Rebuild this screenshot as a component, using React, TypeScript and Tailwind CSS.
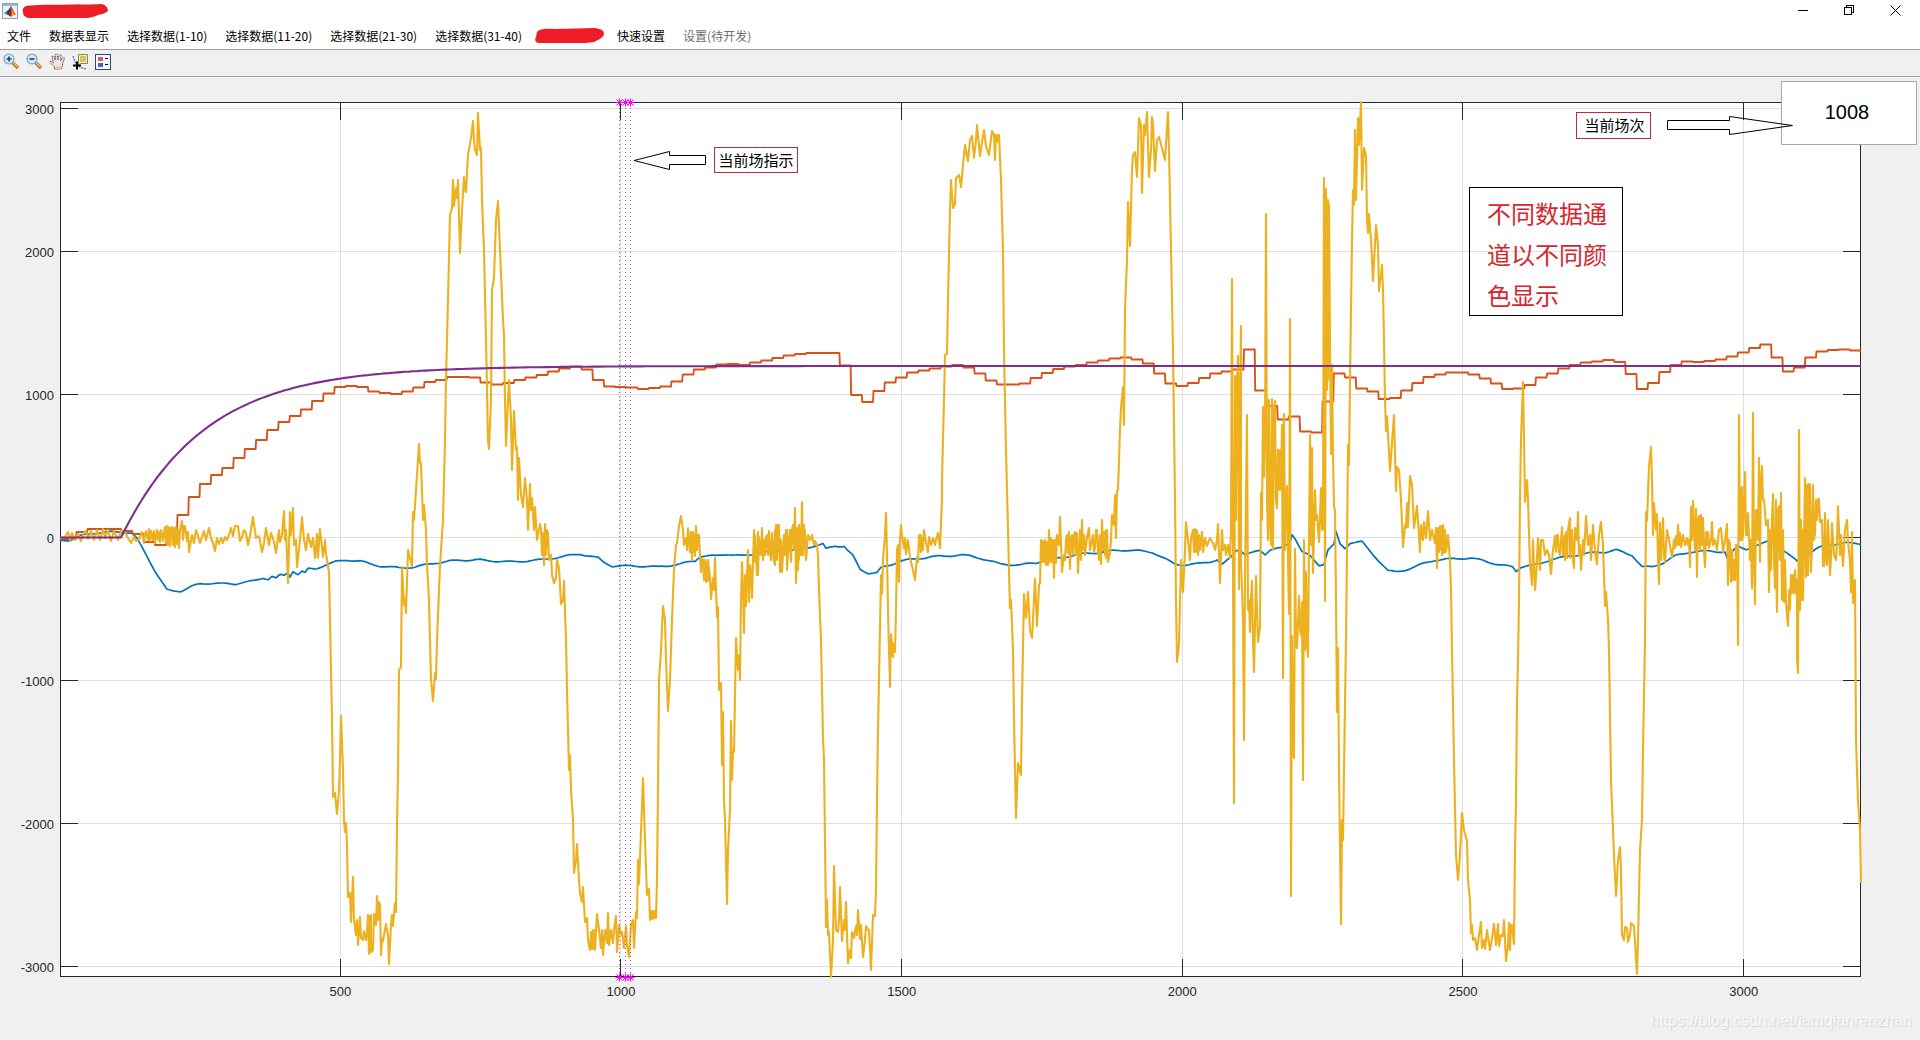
import React from "react";

const SANS = "font-['Liberation_Sans','Noto_Sans_CJK_SC',sans-serif]";

type Point = [number, number];

const parse = (text: string): Point[] =>
  text
    .trim()
    .split(/\s+/)
    .map((pair) => pair.split(",").map(Number) as Point);

const toPath = (points: Point[]) => "M" + points.map(([x, y]) => `${x.toFixed(1)} ${y.toFixed(1)}`).join("L");

/* Yellow channel: fast oscillating signal. */
const YELLOW = `
60,538 65,537 68,532 70,540 72,533 75,540 78,534 81,541 84,533 86,531 88,539 91,531 94,540 97,530 100,540 103,529 105,538 108,530 111,541 114,531 118,540
121,531 125,532 128,538 131,543 134,537 136,541 139,539 142,532 144,543 145,534 146,531 148,540 149,529 150,541 151,531 153,540 154,531 155,543 157,530 158,540 159,532 160,542 161,530 163,541
164,532 165,527 166,543 167,526 168,545 169,527 170,546 171,529 172,527 173,545 174,528 175,547 176,527 177,544 178,530 179,548 180,530 182,521 183,540 184,526 185,526 187,541 188,532 189,552
192,535 194,543 196,530 198,536 200,543 202,537 204,531 206,540 209,528 211,538 213,543 215,551 217,538 219,544 221,538 223,543 225,537 227,540 229,535 231,528
233,536 235,526 238,526 240,541 242,537 244,530 246,533 248,545 250,536 253,517 256,538 259,536 262,552 264,543 266,528 269,545 271,533 274,542 276,553 278,537
279,530 280,542 282,535 284,511 285,540 286,530 288,583 290,512 291,535 293,508 294,545 296,540 297,567 300,540 302,517 304,540 306,550 308,534 311,547 313,538 315,558 317,534 318,558 320,529
323,557 325,540 326,554 329,572 330,620 332,720 333,797 335,793 337,814 339,790 340,760 341,716 343,770 344,820 345,832 346,823 347,845 348,897 350,893 351,922
353,877 354,920 356,935 357,920 358,945 360,917 361,938 363,940 364,931 366,940 367,932 368,915 369,954 370,916 371,915 371,952 373,950 374,914 376,925 377,896 378,920 379,902 380,905 381,955 382,938 383,941 386,924
388,935 389,964 391,925 392,915 393,926 395,903 396,912 397,825 398,775 399,670 401,667 402,567 404,605 405,598 406,613 408,550 410,558 412,566 413,512 414,520
416,490 419,444 420,463 421,463 423,520 424,505 426,530 427,565 429,600 431,680 433,701 435,673 436,679 437,640 439,590 440,566 443,520 445,440 446,380 448,300
450,215 452,208 453,180 454,206 456,188 457,198 458,180 460,253 462,210 464,177 465,190 466,192 468,155 471,138 473,121 474,140 475,150 477,155 478,113 480,150
481,148 482,200 484,250 486,340 488,440 489,449 491,400 492,290 494,278 496,220 498,201 500,250 503,320 504,335 505,400 506,446 508,400 509,380 511,420 512,470
514,411 516,450 517,447 518,500 519,458 521,495 523,507 525,478 527,500 528,530 530,484 531,510 532,498 534,530 535,507 537,540 540,524 541,530 542,555 543,533
544,565 545,524 546,555 547,530 548,533 549,560 551,555 552,575 554,583 556,578 557,560 559,568 561,604 563,600 564,581 566,640 567,690 569,770 570,755 571,790
573,820 574,873 576,860 577,844 579,880 580,893 582,902 583,887 585,922 587,918 588,940 590,950 591,932 592,949 593,930 594,949 595,930 595,950 597,914 599,930 601,948 602,930
603,955 605,930 607,943 608,913 609,945 611,930 613,943 614,930 616,916 617,952 619,925 621,935 622,932 624,948 626,926 627,945 629,957 631,925 633,920 634,948
636,912 637,918 638,860 639,884 641,832 643,778 645,840 647,895 649,889 650,920 651,911 652,919 653,911 654,918 655,911 656,918 657,880 658,790 659,680 661,650 663,606 665,620 666,660
668,711 670,680 672,620 674,570 676,545 677,543 679,526 681,516 683,530 684,545 686,538 687,550 688,528 690,552 691,532 692,560 693,532 694,552 695,534 695,556 696,526 697,550 698,535 699,535
700,555 701,572 702,558 703,560 704,580 705,560 706,582 707,562 708,581 708,560 710,577 711,599 713,578 714,590 715,558 716,590 717,617 718,607 719,690 721,683 722,765 723,712 724,800
725,820 727,904 728,850 730,810 731,721 732,780 733,750 734,752 736,638 738,670 739,655 740,680 741,600 742,562 743,590 744,633 745,575 746,606 747,575 748,550 749,602
750,565 751,570 752,598 753,560 754,530 755,562 755,535 757,575 758,532 758,575 759,537 761,555 762,528 763,560 764,540 765,555 766,538 767,535 768,555 769,531 770,552 771,560 772,533 773,552 774,562 775,530
775,565 776,525 777,560 778,525 779,525 780,572 781,540 782,572 784,535 785,555 786,530 787,530 787,570 789,540 790,530 791,562 792,530 793,525 794,550 795,508 796,583 797,528 798,570 799,525 799,560 800,528 801,555 802,502 803,555 804,525 804,548 805,530 806,560 808,535
810,540 812,535 814,545 815,541 817,545 818,555 819,590 821,640 822,690 823,738 824,760 825,840 826,927 827,900 828,935 829,932 831,977 833,940 834,866 835,900
836,930 838,932 839,920 840,887 842,941 844,920 845,930 846,902 848,963 850,950 851,958 852,932 854,938 856,926 857,935 858,910 860,939 861,925 863,957 865,940
866,926 868,930 869,930 871,970 873,915 875,916 876,890 877,800 878,730 879,680 881,575 882,594 883,560 885,535 886,513 887,555 888,610 889,650 890,687 891,634
893,657 893,643 895,652 896,610 897,550 898,545 899,582 900,540 901,525 902,535 904,548 905,538 906,554 908,540 910,558 913,570 915,580 917,557 918,562 919,535
921,552 921,535 923,550 924,530 925,537 928,552 929,537 931,545 933,538 935,545 936,540 938,533 940,548 942,500 942,480 943,440 944,400 945,355 947,354 948,300
950,210 951,180 953,208 955,204 956,178 959,175 961,187 963,165 965,145 968,161 970,140 972,136 974,158 976,140 977,125 980,156 982,142 984,130 986,146 989,155
992,131 994,135 995,160 996,135 997,142 998,135 999,135 1001,180 1003,250 1004,350 1006,450 1008,530 1009,570 1010,608 1011,600 1013,650 1014,720 1016,818 1018,763 1021,775
1022,700 1024,594 1026,618 1028,592 1030,630 1032,638 1034,600 1035,579 1037,626 1039,585 1040,583 1041,540 1042,562 1043,541 1044,562 1045,540 1046,565 1047,542 1048,565 1049,530 1050,562 1051,538 1052,562 1053,540 1054,578 1055,540 1056,563 1057,535
1059,545 1060,517 1062,572 1064,555 1065,560 1066,540 1067,535 1068,553 1069,532 1070,569 1071,538 1072,535 1073,555 1074,535 1075,532 1076,555 1077,533 1078,573 1080,530 1081,560 1082,520 1083,550 1084,535 1085,555 1087,537 1089,528 1090,550 1092,540
1093,535 1094,552 1095,548 1096,530 1097,530 1098,550 1099,560 1100,535 1101,564 1102,520 1103,550 1104,532 1105,555 1106,530 1106,558 1107,530 1108,562 1110,553 1111,540 1112,515 1114,525 1115,495 1116,538 1117,491 1118,490 1120,430
1121,408 1123,387 1124,425 1125,310 1127,260 1128,202 1130,246 1132,170 1133,155 1135,152 1137,177 1139,118 1141,125 1142,193 1144,125 1145,135 1147,112 1149,177
1151,150 1152,117 1153,125 1155,171 1157,140 1159,137 1162,148 1165,160 1168,112 1169,150 1171,250 1173,350 1175,500 1176,600 1177,662 1179,645 1181,560 1183,592
1185,550 1186,522 1188,540 1190,560 1191,538 1193,530 1194,552 1195,529 1196,552 1197,530 1198,555 1199,535 1200,550 1202,532 1203,552 1205,538 1207,546 1210,538 1213,543 1215,550 1217,540 1218,524
1220,583 1222,530 1223,550 1225,545 1226,555 1228,545 1230,558 1231,530 1232,279 1233,560 1234,803 1235,376 1236,520 1237,380 1238,356 1239,589 1240,400 1241,326 1241,560 1243,620 1244,740
1245,580 1247,415 1248,610 1249,600 1250,632 1251,600 1252,581 1253,640 1254,672 1256,576 1258,642 1260,626 1261,493 1262,520 1263,407 1264,477 1265,440 1266,214 1267,500 1268,540 1269,400 1270,520
1271,545 1272,399 1273,550 1274,410 1275,401 1276,500 1277,508 1278,450 1279,490 1280,450 1281,490 1282,425 1283,678 1284,414 1285,550 1286,500 1287,486 1288,560 1289,614 1290,319 1291,896 1292,636 1293,750 1294,758 1295,549 1296,640 1297,648
1299,596 1300,630 1301,635 1302,602 1303,780 1304,540 1305,650 1306,572 1307,645 1308,657 1310,435 1311,545 1312,448 1313,573 1315,490 1316,520 1317,515 1319,542 1321,488 1322,530 1323,528 1324,178 1325,601
1326,189 1327,390 1328,200 1328,380 1329,204 1330,340 1331,454 1332,365 1333,455 1334,507 1335,510 1336,600 1337,712 1338,648 1339,770 1341,924 1342,820 1343,840 1344,770 1346,640 1347,550 1348,445
1349,465 1350,380 1352,240 1353,190 1354,204 1355,130 1356,200 1358,118 1359,145 1361,102 1362,190 1364,148 1366,155 1367,220 1368,233 1369,214 1371,240 1373,281
1376,225 1378,245 1379,291 1382,265 1383,290 1384,340 1385,400 1386,431 1387,416 1390,471 1394,415 1396,491 1397,467 1399,470 1401,500 1403,547 1405,525 1406,528
1407,503 1408,527 1410,476 1412,485 1414,528 1417,506 1420,552 1421,525 1423,540 1424,522 1426,538 1428,511 1430,540 1432,530 1435,543 1436,528 1437,568 1438,528
1439,552 1440,526 1441,550 1442,526 1442,555 1443,525 1444,553 1445,530 1446,552 1448,535 1450,560 1451,590 1452,650 1454,760 1456,855 1458,880 1460,855 1462,813 1464,830 1466,838 1467,840 1468,880
1470,900 1471,933 1472,925 1473,940 1475,938 1477,950 1479,935 1481,922 1482,948 1484,940 1485,949 1487,930 1490,950 1492,938 1494,924 1496,945 1498,924 1499,946
1501,935 1503,936 1504,920 1506,961 1508,945 1509,923 1510,950 1511,925 1512,925 1514,944 1515,850 1516,800 1517,700 1518,660 1519,600 1520,500 1521,440 1523,382 1524,440
1525,502 1527,480 1528,500 1530,565 1532,585 1533,540 1535,590 1536,578 1538,538 1540,570 1541,540 1543,540 1545,555 1547,550 1549,555 1551,574 1553,550 1555,536
1556,552 1557,535 1558,535 1559,552 1560,555 1562,527 1563,555 1564,536 1565,560 1566,532 1567,558 1568,530 1570,518 1570,558 1572,530 1573,560 1574,568 1575,528 1577,540 1578,512 1579,555 1580,545 1581,570 1583,540 1584,555 1586,516 1588,545
1590,535 1591,560 1593,525 1595,552 1597,564 1599,535 1601,522 1603,545 1605,606 1606,592 1608,620 1609,650 1611,780 1613,830 1614,855 1616,896 1618,860 1620,847
1621,870 1622,935 1624,940 1625,927 1627,928 1628,942 1630,935 1631,923 1634,926 1637,974 1638,940 1640,850 1642,820 1643,750 1645,640 1646,512 1647,521 1649,466
1651,447 1652,480 1653,535 1654,503 1656,530 1657,514 1658,560 1659,584 1660,523 1661,560 1663,518 1664,557 1665,562 1667,530 1669,540 1672,557 1674,540 1675,548 1676,536 1677,545 1678,525 1679,545 1680,533 1681,547
1683,535 1685,545 1687,538 1688,545 1689,540 1690,567 1691,507 1692,540 1693,501 1694,530 1695,550 1696,509 1697,577 1698,520 1699,516 1700,550 1701,515 1702,545 1703,518 1704,550 1705,567 1706,532 1707,545 1708,532 1709,548 1711,540 1712,522 1713,545
1715,540 1717,550 1719,530 1721,528 1723,552 1725,540 1727,524 1728,585 1729,540 1730,545 1731,582 1732,550 1733,580 1734,560 1735,580 1736,545 1737,545 1738,645 1739,415 1740,540 1741,490 1742,487 1742,540 1743,535 1745,472
1746,535 1747,535 1748,513 1750,560 1751,540 1752,588 1753,413 1754,560 1755,604 1756,510 1757,510 1758,540 1759,458 1760,562 1761,480 1762,466 1763,500 1764,500 1766,525 1768,520 1769,592 1770,530 1771,570 1772,520 1773,494 1774,560 1775,588
1776,500 1776,560 1777,612 1778,510 1779,506 1780,560 1781,493 1782,600 1783,530 1784,602 1785,560 1786,603 1788,626 1789,590 1790,610 1791,575 1792,593 1793,575 1794,593 1795,570 1796,594 1797,580 1797,660 1798,673 1799,430 1800,610 1801,520 1802,600 1803,530 1803,600
1805,478 1806,577 1807,486 1808,484 1808,575 1810,484 1811,572 1812,547 1813,485 1814,540 1815,533 1816,500 1817,520 1818,499 1819,499 1820,522 1822,520 1823,566 1824,566 1825,513 1826,560 1827,565 1828,520 1830,575 1831,558 1832,523
1834,555 1836,560 1837,540 1838,506 1840,555 1841,535 1843,566 1845,530 1847,520 1848,542 1850,560 1851,592 1852,532 1853,603 1855,580 1856,740 1858,800 1860,830
1861,883`;

/* Blue channel: slow signal with a small ripple. */
const BLUE = `
60,540 70,540 80,536 95,533 105,532 125,532 132,533 137,539 148,558 158,576 167,590 173,591 181,591 190,587 200,584 213,583 225,584 235,584 243,582 255,581
264,578 268,579 272,576 276,578 280,575 284,576 288,573 290,577 293,571 298,574 302,571 305,573 308,569 315,569 325,565 335,562 348,560 360,561 370,564 380,566 400,568 415,567 425,565 435,563 450,561 465,560 480,560 510,562 540,560 560,557 580,554
590,556 598,558 603,562 612,566 640,566 658,567 680,564 695,561 700,556 715,556 727,554 742,556 755,554 775,551 790,551 805,548 823,544 826,549 835,546
844,546 848,551 853,556 860,569 868,573 877,573 881,568 890,565 900,561 915,559 930,557 960,555 970,556 980,558 990,561 1000,564 1020,565 1035,563 1045,560
1060,558 1080,554 1095,553 1110,551 1125,550 1140,551 1152,552 1165,559 1175,564 1185,565 1197,564 1208,562 1217,560 1222,565 1230,558 1236,550 1240,549 1245,555
1252,553 1260,550 1265,554 1270,550 1282,548 1290,542 1292,534 1295,538 1302,552 1310,556 1319,565 1324,564 1328,550 1334,545 1336,532 1340,544 1345,548 1350,543
1362,542 1370,551 1380,562 1388,571 1396,572 1405,570 1415,567 1425,563 1435,560 1450,559 1470,558 1485,561 1500,565 1513,567 1516,571 1521,567 1535,565 1550,560
1570,556 1590,553 1605,552 1616,550 1625,553 1632,555 1642,567 1652,567 1665,562 1675,556 1690,552 1710,551 1725,552 1727,558 1738,546 1746,549 1760,545 1770,540
1780,548 1790,556 1797,561 1805,556 1815,550 1825,545 1845,543 1861,544`;

/* Orange channel: one level for every twenty samples. */
const ORANGE_LEVELS = [
  532, 529, 529, 529, 531, 534, 542, 545, 531, 515, 497, 484, 475, 468, 458, 449, 440, 430, 422, 416,
  409.5, 401, 393.5, 387, 386, 387, 391.5, 393, 394, 391.5, 387.5, 382, 380, 377, 377, 377.5, 382.5, 384.5, 383, 380,
  377.5, 375, 371.5, 368.5, 366.5, 369.5, 380, 386.5, 387, 387.5, 389, 388, 386.5, 381.5, 374.5, 369.5, 367.5, 364.5, 364, 365,
  362.5, 360.5, 358, 355.5, 354, 353, 353, 353, 365.5, 395, 402, 391, 382.5, 377.5, 372.5, 370.5, 368.5, 366.5, 365, 367.5,
  373.5, 380.5, 384.5, 384.5, 383.5, 378, 373, 369, 366.5, 365, 362.5, 360.5, 358.5, 357.5, 359.5, 363.5, 373.5, 383.5, 386, 383,
  378, 373.5, 371.5, 369.5, 349.5, 390.5, 406, 419.5, 416.5, 431.5, 432.5, 401.5, 373.5, 377.5, 388.5, 391.5, 399, 398, 390.5, 383,
  377, 374.5, 372.5, 372.5, 374.5, 378.5, 383.5, 389, 388.5, 385, 377.5, 373.5, 368.5, 365, 362.5, 361.5, 360, 362, 374, 389,
  383, 372, 365, 361.5, 362, 361, 359.5, 356.5, 352.5, 348, 344.5, 357.5, 371.5, 367.5, 357.5, 351.5, 350, 349.5, 350.5,
];

function rippled(points: Point[]): Point[] {
  const out: Point[] = [];
  let n = 0;
  for (let i = 0; i < points.length - 1; i++) {
    const [x0, y0] = points[i];
    const [x1, y1] = points[i + 1];
    for (let x = x0; x < x1; x += 2) {
      const t = (x - x0) / (x1 - x0);
      out.push([x, y0 + (y1 - y0) * t + Math.sin(n * 12.9898) * 0.8]);
      n++;
    }
  }
  out.push(points[points.length - 1]);
  return out;
}

function stepped(): Point[] {
  const out: Point[] = [
    [60, 539],
    [76, 539],
  ];
  ORANGE_LEVELS.forEach((y, i) => {
    out.push([76.5 + i * 11.226, y], [76 + (i + 1) * 11.226, y]);
  });
  return out;
}

function saturating(): Point[] {
  const out: Point[] = [[60, 537.5]];
  for (let x = 121; x <= 1861; x += 4) {
    out.push([x, 537.5 - 171.5 * (1 - Math.exp(-(x - 121) / 84))]);
  }
  out.push([1861, 366]);
  return out;
}

const X_TICKS = [
  { label: "500", at: 340.5 },
  { label: "1000", at: 620.5 },
  { label: "1500", at: 901.5 },
  { label: "2000", at: 1182.5 },
  { label: "2500", at: 1462.5 },
  { label: "3000", at: 1743.5 },
];
const Y_TICKS = [
  { label: "3000", at: 108.5 },
  { label: "2000", at: 251.5 },
  { label: "1000", at: 394.5 },
  { label: "0", at: 537.5 },
  { label: "-1000", at: 680.5 },
  { label: "-2000", at: 823.5 },
  { label: "-3000", at: 966.5 },
];
const CURSORS = [619.5, 625.5, 630.5];

function Plot() {
  return (
    <svg
      className="block h-full min-w-0 flex-1 overflow-visible"
      viewBox="60 102 1801 875"
      preserveAspectRatio="none"
      role="img"
      aria-label="数据曲线"
    >
      <rect x="60" y="102" width="1801" height="875" fill="#fff" />
      <g stroke="#dedede" shapeRendering="crispEdges">
        {X_TICKS.map((t) => (
          <line key={t.label} x1={t.at} x2={t.at} y1="102" y2="977" />
        ))}
        {Y_TICKS.map((t) => (
          <line key={t.label} x1="60" x2="1861" y1={t.at} y2={t.at} />
        ))}
      </g>
      <g stroke="#262626" fill="none" shapeRendering="crispEdges">
        <rect x="60.5" y="102.5" width="1800" height="874" />
        {X_TICKS.map((t) => (
          <path key={t.label} d={`M${t.at} 102V120M${t.at} 977V959`} />
        ))}
        {Y_TICKS.map((t) => (
          <path key={t.label} d={`M60 ${t.at}H78M1861 ${t.at}H1843`} />
        ))}
      </g>
      <g fill="none" strokeLinejoin="round">
        <path d={toPath(rippled(parse(BLUE)))} stroke="#0072bd" strokeWidth="1.7" />
        <path d={toPath(stepped())} stroke="#d95319" strokeWidth="1.9" />
        <path d={toPath(parse(YELLOW))} stroke="#edb120" strokeWidth="2.1" />
        <path d={toPath(saturating())} stroke="#7e2f8e" strokeWidth="2.1" />
      </g>
      {CURSORS.map((x) => (
        <g key={x} stroke="#ff00ff">
          <line x1={x} x2={x} y1="104" y2="976" stroke="#c93fd6" strokeDasharray="1 3" shapeRendering="crispEdges" />
          {[102.5, 977.5].map((y) => (
            <path key={y} d={`M${x - 4} ${y}h8M${x} ${y - 4}v8M${x - 3} ${y - 3}l6 6M${x + 3} ${y - 3}l-6 6`} />
          ))}
        </g>
      ))}
    </svg>
  );
}

function MatlabIcon() {
  return (
    <svg width="16" height="16" viewBox="0 0 16 16" aria-hidden="true">
      <rect x="0.5" y="0.5" width="15" height="15" fill="#eef2f6" stroke="#8da0b3" />
      <rect x="1" y="1" width="14" height="2" fill="#9db8d0" />
      <path d="M2 10l3-2 2-1 2 3-2 2-2 0z" fill="#3d7ab5" />
      <path d="M5 8c2-1 3-4 4-5l-1 8-2 1z" fill="#1d3f6e" />
      <path d="M9 3c1 1 3 6 5 9-2-1-3-1-5 2-1-1-2-2-3-2 2-2 2-6 3-9z" fill="#d9541a" />
      <path d="M9 3c0 3 0 7 0 11-1-1-2-2-3-2 2-2 2-6 3-9z" fill="#8c2a12" />
      <path d="M10 6c1 3 1 5 2 6l-2 1z" fill="#f3a13b" />
    </svg>
  );
}

function Magnifier({ plus }: { plus?: boolean }) {
  return (
    <svg width="17" height="17" viewBox="0 0 17 17" aria-hidden="true">
      <path d="M9.500 9.500L15 15" stroke="#b8722c" strokeWidth="3.400" />
      <path d="M9.500 9L14.500 14" stroke="#f5b866" strokeWidth="1.600" />
      <circle cx="6" cy="6" r="4.900" fill="#d3ecfa" stroke="#86a9c9" strokeWidth="1.400" />
      <path d={plus ? "M3.500 6h5M6 3.500v5" : "M3.500 6h5"} stroke="#1c3d6b" strokeWidth="1.600" />
    </svg>
  );
}

function HandIcon() {
  return (
    <svg width="17" height="17" viewBox="0 0 17 17" aria-hidden="true">
      <path
        d="M5.500 16v-2L1 9.500c-.6-1.200.7-1.900 1.700-1.100L4.500 10 3 4c0-1.400 1.600-1.500 2-.2L6.200 7 6.400 1.800c.2-1.300 1.800-1.300 2 0L8.700 7l1.500-4.700c.5-1.200 2-.8 1.900.5L11.500 8l2-3.200c.8-1 2.200-.3 1.800.9L13.500 11v2L12 16z"
        fill="#fbe3cf"
        stroke="#4a4f7c"
        strokeDasharray="1.500 0.700"
      />
      <path d="M6 13.500l6 0-.5 2.500H6z" fill="#efc19c" />
    </svg>
  );
}

function DataCursorIcon() {
  return (
    <svg width="17" height="17" viewBox="0 0 17 17" aria-hidden="true">
      <path d="M1 3c1 3 1.500 6 4 9s6 3 9 4" fill="none" stroke="#3a35b0" strokeDasharray="2 1" />
      <path d="M6.500 1.500h9v9h-7l-3 2.500 1-3z" fill="#f7f0a0" stroke="#8a8748" />
      <path d="M8 4h6M8 6h6M8 8h6" stroke="#9c9850" />
      <path d="M1 12.500h8M5 8.500v8" stroke="#000" strokeWidth="2" />
    </svg>
  );
}

function LegendIcon() {
  return (
    <svg width="17" height="17" viewBox="0 0 17 17" shapeRendering="crispEdges" aria-hidden="true">
      <rect x="0.5" y="1.5" width="15" height="15" fill="#f4f7fd" stroke="#33487c" />
      <rect x="3" y="4" width="5" height="4" fill="#d8595f" />
      <rect x="3" y="10" width="5" height="4" fill="#5b5bd0" />
      <path d="M10 5.500h3M10 11.500h3" stroke="#000" />
    </svg>
  );
}

function Scribble({ wide }: { wide?: boolean }) {
  return wide ? (
    <svg width="88" height="16" viewBox="0 0 88 16" aria-hidden="true">
      <path
        d="M4 3C10 1 70 2 78 1c6 0 8 4 8 7-2 2-5 3-10 4-4 2-8 3-12 3H9C4 15 1 13 1 9 0 6 1 5 4 3z"
        fill="#ee1c24"
      />
    </svg>
  ) : (
    <svg className="-mx-[5px]" width="69" height="16" viewBox="0 0 69 16" aria-hidden="true">
      <path d="M3 3C8 0 14 1 20 1l40-1c7 1 9 3 9 6-1 4-6 6-10 8-5 1-12 1-18 1H4c-5-1-4-4-3-6C2 6 1 5 3 3z" fill="#ee1c24" />
    </svg>
  );
}

const TOOLS = [
  { name: "放大", icon: <Magnifier plus /> },
  { name: "缩小", icon: <Magnifier /> },
  { name: "平移", icon: <HandIcon /> },
  { name: "数据游标", icon: <DataCursorIcon /> },
  { name: "图例", icon: <LegendIcon /> },
];

export default function App() {
  return (
    <div className={`flex h-screen min-h-[600px] flex-col bg-[#f0f0f0] text-black ${SANS}`}>
      <header className="bg-white">
        <div className="flex h-6 items-start justify-between">
          <div className="flex items-center gap-1 pt-[3px] pl-[2px]">
            <MatlabIcon />
            <Scribble wide />
          </div>
          <div className="flex pr-[2px]">
            <button type="button" aria-label="最小化" className="flex h-5 w-[46px] items-center justify-center">
              <svg width="11" height="11" viewBox="0 0 11 11" fill="none" stroke="#000" shapeRendering="crispEdges">
                <path d="M0 5.500h10" />
              </svg>
            </button>
            <button type="button" aria-label="还原" className="flex h-5 w-[46px] items-center justify-center">
              <svg width="11" height="11" viewBox="0 0 11 11" fill="none" stroke="#000" shapeRendering="crispEdges">
                <path d="M0.500 2.500h7v7h-7zM2.500 2.500v-2h7v7h-2" />
              </svg>
            </button>
            <button type="button" aria-label="关闭" className="flex h-5 w-[46px] items-center justify-center">
              <svg width="11" height="11" viewBox="0 0 11 11" fill="none" stroke="#000">
                <path d="M0.500 0.500l10 10M10.500 0.500l-10 10" />
              </svg>
            </button>
          </div>
        </div>
        <nav className="flex h-[25px] items-center gap-[18px] pb-[2px] pl-[7px] font-['Noto_Sans_CJK_SC',sans-serif] text-xs whitespace-nowrap">
          <button type="button">文件</button>
          <button type="button">数据表显示</button>
          <button type="button">选择数据(1-10)</button>
          <button type="button">选择数据(11-20)</button>
          <button type="button">选择数据(21-30)</button>
          <button type="button">选择数据(31-40)</button>
          <Scribble />
          <button type="button">快速设置</button>
          <button type="button" disabled className="text-[#6d6d6d]">
            设置(待开发)
          </button>
        </nav>
      </header>

      <div className="flex h-7 items-start gap-[6px] border-y border-[#a0a0a0] pt-[3px] pl-[3px]">
        {TOOLS.map((tool) => (
          <button key={tool.name} type="button" aria-label={tool.name}>
            {tool.icon}
          </button>
        ))}
      </div>

      <main className="relative flex min-h-0 flex-1 flex-col border-t border-white pt-6">
        <div className="flex min-h-0 flex-1 pr-[59px]">
          <div className="flex w-[60px] flex-col justify-between pt-px pr-[6px] pb-[3px] text-right text-[13px] leading-[13px] text-[#262626]">
            {Y_TICKS.map((t) => (
              <span key={t.label}>{t.label}</span>
            ))}
          </div>
          <Plot />
        </div>
        <div className="mt-2 mr-9 ml-[200px] grid grid-cols-6 text-center text-[13px] leading-[13px] text-[#262626]">
          {X_TICKS.map((t) => (
            <span key={t.label}>{t.label}</span>
          ))}
        </div>
        <p className="mt-[11px] pr-2 pb-[7px] text-right text-base leading-6 text-[#f8f8f8] [text-shadow:1px_1px_1px_#d0d0d0]">
          https://blog.csdn.net/iamqianrenzhan
        </p>

        <input
          type="text"
          readOnly
          aria-label="当前场次"
          defaultValue="1008"
          className="absolute top-[3px] right-[3px] h-16 w-[136px] border border-[#a8a8a8] bg-white pr-1 pb-px text-center text-xl outline-none"
        />

        <svg className="absolute top-[73px] left-[633px]" width="74" height="20" viewBox="0 0 74 20" fill="none" stroke="#000" aria-hidden="true">
          <path d="M1 9.500L36.500 0.500v4h36v9h-36v5z" />
        </svg>
        <div className="absolute top-[69px] left-[714px] flex h-[26px] w-[84px] items-center justify-center border border-[#b5303c] pt-[2px] text-[15px]">
          当前场指示
        </div>

        <svg className="absolute top-[38px] right-[126px]" width="127" height="20" viewBox="0 0 127 20" fill="none" stroke="#000" aria-hidden="true">
          <path d="M0.500 4.500h62v-4l63 9-63 9v-5h-62z" />
        </svg>
        <div className="absolute top-[34px] right-[269px] flex h-[27px] w-[75px] items-center justify-center border border-[#b5303c] pt-[2px] pl-[2px] text-[15px]">
          当前场次
        </div>

        <p className="absolute top-[109px] right-[297px] h-[129px] w-[154px] border border-black pt-[6px] pr-[15px] pl-[17px] text-2xl leading-[41px] text-[#d9252b]">
          不同数据通道以不同颜色显示
        </p>
      </main>
    </div>
  );
}
